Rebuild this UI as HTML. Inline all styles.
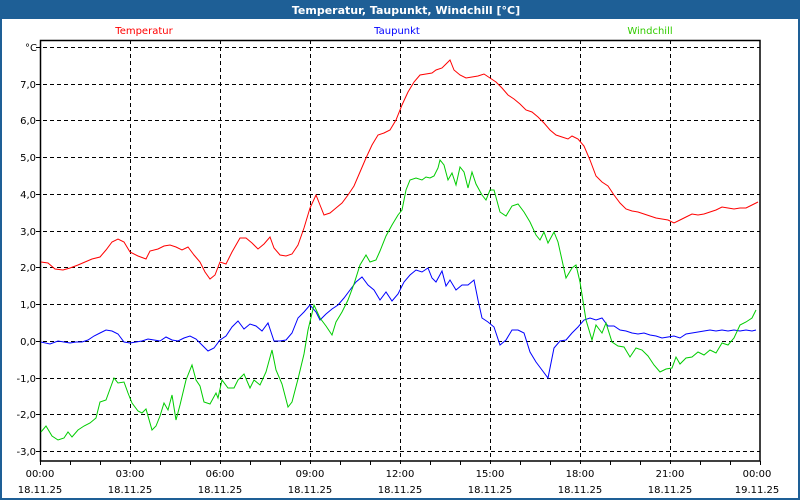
<!DOCTYPE html>
<html><head><meta charset="utf-8"><style>
html,body{margin:0;padding:0;background:#fff;}
body{width:800px;height:500px;overflow:hidden;position:relative;font-family:"DejaVu Sans","Liberation Sans",sans-serif;}
</style></head><body>
<svg width="800" height="500" xmlns="http://www.w3.org/2000/svg" style="position:absolute;left:0;top:0">
<rect x="0" y="0" width="800" height="500" fill="#1e5f96"/>
<rect x="2" y="19" width="796" height="479" fill="#fff"/>
<text x="406" y="14" fill="#fff" font-size="11" font-weight="bold" text-anchor="middle" font-family="DejaVu Sans, sans-serif">Temperatur, Taupunkt, Windchill [°C]</text>
<g font-size="10" font-family="DejaVu Sans, sans-serif">
<text x="144" y="34" fill="#ff0000" text-anchor="middle">Temperatur</text>
<text x="397" y="34" fill="#0000ff" text-anchor="middle">Taupunkt</text>
<text x="650" y="34" fill="#33cc00" text-anchor="middle">Windchill</text>
</g>
<g stroke="#000" stroke-width="1" stroke-dasharray="4,3" fill="none">
<path d="M36 47.5H760M36 84.5H760M36 120.5H760M36 157.5H760M36 194.5H760M36 231.5H760M36 267.5H760M36 304.5H760M36 341.5H760M36 378.5H760M36 414.5H760M36 451.5H760"/>
<path d="M130.5 40V465M220.5 40V465M310.5 40V465M400.5 40V465M490.5 40V465M580.5 40V465M670.5 40V465"/>
</g>
<g stroke="#000" stroke-width="1" fill="none">
<rect x="40.5" y="40.5" width="719.5" height="420.5" stroke-width="1.5"/>
<path d="M70.5 461V465M100.5 461V465M160.5 461V465M190.5 461V465M250.5 461V465M280.5 461V465M340.5 461V465M370.5 461V465M430.5 461V465M460.5 461V465M520.5 461V465M550.5 461V465M610.5 461V465M640.5 461V465M700.5 461V465M730.5 461V465M760.5 461V465M40.5 461V465"/>
</g>
<g font-size="10" fill="#000" text-anchor="end" font-family="DejaVu Sans, sans-serif">
<text x="37" y="51">°C</text>
<text x="36" y="88">7,0</text><text x="36" y="124">6,0</text><text x="36" y="161">5,0</text><text x="36" y="198">4,0</text><text x="36" y="235">3,0</text><text x="36" y="271">2,0</text><text x="36" y="308">1,0</text><text x="36" y="345">0,0</text><text x="36" y="382">-1,0</text><text x="36" y="418">-2,0</text><text x="36" y="455">-3,0</text>
</g>
<g font-size="10" fill="#000" text-anchor="middle" font-family="DejaVu Sans, sans-serif">
<text x="40" y="477">00:00</text><text x="130" y="477">03:00</text><text x="220" y="477">06:00</text><text x="310" y="477">09:00</text><text x="400" y="477">12:00</text><text x="490" y="477">15:00</text><text x="580" y="477">18:00</text><text x="670" y="477">21:00</text><text x="757" y="477">00:00</text>
<text x="40" y="493">18.11.25</text><text x="130" y="493">18.11.25</text><text x="220" y="493">18.11.25</text><text x="310" y="493">18.11.25</text><text x="400" y="493">18.11.25</text><text x="490" y="493">18.11.25</text><text x="580" y="493">18.11.25</text><text x="670" y="493">18.11.25</text><text x="757" y="493">19.11.25</text>
</g>
<g fill="none" stroke-width="1">
<polyline stroke="#ff0000" points="41,262 48,263 55,269 63,270 70,268 78,265 85,262 92,259 100,257 106,250 112,242 118,239 124,242 130,252 138,256 146,259 150,251 158,249 164,246 170,245 176,247 182,250 188,247 194,255 200,262 205,272 210,279 215,275 220,262 226,264 232,252 240,238 246,238 252,243 258,249 264,244 270,237 274,248 280,255 286,256 292,254 298,245 304,228 310,208 316,195 320,205 324,215 330,213 336,208 342,203 348,195 354,186 360,172 366,158 372,145 378,135 384,133 390,130 396,120 402,105 408,92 414,82 420,75 426,74 432,73 436,70 442,68 446,64 450,60 454,70 460,75 466,78 472,77 478,76 484,74 490,78 496,82 502,88 508,95 514,99 520,104 526,110 532,112 538,117 544,123 550,130 556,135 562,137 568,139 572,136 578,139 584,146 590,160 596,176 602,182 608,186 614,195 620,203 626,209 632,211 638,212 644,214 650,216 656,218 662,219 668,220 674,223 680,220 686,217 692,214 698,215 704,214 710,212 716,210 722,207 728,208 734,209 740,208 746,208 752,205 758,202"/>
<polyline stroke="#0000ff" points="41,342 50,344 58,341 64,342 70,343 76,342 82,342 88,340 94,336 100,333 106,330 112,331 118,334 124,342 130,343 136,342 142,341 148,339 154,340 160,341 166,337 172,340 178,341 184,338 190,336 196,339 202,345 208,351 214,348 220,340 226,336 232,327 238,321 244,329 250,324 256,326 262,331 268,323 274,341 280,341 286,340 292,333 298,318 304,312 310,305 316,312 320,320 326,314 332,309 338,305 344,298 350,290 356,282 362,277 368,285 374,290 380,300 386,292 392,301 398,294 404,282 410,275 416,270 422,272 428,268 432,278 436,282 442,271 446,286 450,280 456,290 462,285 468,285 474,280 478,300 482,318 488,322 494,327 500,345 506,340 512,330 518,330 524,333 530,352 536,362 542,370 548,378 554,348 560,341 566,340 572,333 578,327 584,320 590,318 596,320 602,318 608,326 614,326 620,330 626,331 632,333 638,334 644,333 650,335 656,336 662,338 668,337 674,336 680,338 686,334 692,333 698,332 704,331 710,330 716,331 722,330 728,331 734,330 740,331 746,330 752,331 756,330"/>
<polyline stroke="#00cc00" points="41,432 46,426 52,436 58,440 64,438 68,432 72,437 78,430 84,426 90,423 96,418 100,402 106,400 110,389 114,378 118,383 124,382 128,393 132,403 138,411 142,413 146,409 152,430 156,426 160,416 164,403 168,410 172,395 176,420 180,405 186,380 192,365 196,380 200,386 204,402 210,404 216,393 218,398 222,380 228,388 234,388 238,380 244,374 250,388 254,380 260,385 266,372 272,350 276,370 282,384 288,407 292,402 298,379 304,354 308,330 314,305 320,318 326,326 332,335 336,322 342,312 348,300 354,284 360,265 366,255 370,262 376,260 380,251 386,236 392,225 398,215 402,210 406,190 410,180 416,178 422,180 426,177 430,178 434,176 438,168 440,160 444,165 448,180 452,173 456,185 460,167 464,172 468,188 472,172 476,184 482,195 486,200 490,190 494,190 500,212 506,216 512,206 518,204 524,212 530,222 536,235 540,240 544,232 548,243 554,232 558,242 562,260 566,278 572,268 576,265 580,282 586,320 592,340 596,325 602,333 606,323 612,342 618,346 624,347 630,357 636,348 642,350 648,356 654,365 660,372 666,369 672,368 676,357 680,364 686,358 692,357 698,352 704,355 710,350 716,353 722,343 728,345 734,338 740,325 746,322 752,318 756,310"/>
</g>
</svg>
</body></html>
